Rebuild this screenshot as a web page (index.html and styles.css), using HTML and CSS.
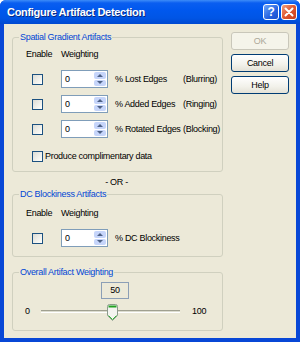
FILE: index.html
```html
<!DOCTYPE html>
<html lang="en">
<head>
  <meta charset="UTF-8">
  <title>Configure Artifact Detection</title>
  <link rel="stylesheet" href="styles.css">
</head>
<body>
<div class="window">
  <div class="titlebar">
    <span class="title">Configure Artifact Detection</span>
    <div class="caption-buttons">
      <span class="cap cap-help">?</span>
      <span class="cap cap-close">
        <svg width="10" height="10" viewBox="0 0 10 10"><path d="M1.5 1.5 L8.5 8.5 M8.5 1.5 L1.5 8.5" stroke="#fff" stroke-width="2" stroke-linecap="round"/></svg>
      </span>
    </div>
  </div>

  <div class="client">
    <div class="groups">

      <fieldset class="group group-spatial">
        <legend>Spatial Gradient Artifacts</legend>
        <div class="rows">
          <span class="head">Enable</span>
          <span class="head">Weighting</span>
          <span></span><span></span>

          <span class="check"></span>
          <div class="spin"><span class="spin-val">0</span><span class="spin-btns"><i class="up"></i><i class="down"></i></span></div>
          <span>% Lost Edges</span>
          <span>(Blurring)</span>

          <span class="check"></span>
          <div class="spin"><span class="spin-val">0</span><span class="spin-btns"><i class="up"></i><i class="down"></i></span></div>
          <span>% Added Edges</span>
          <span>(Ringing)</span>

          <span class="check"></span>
          <div class="spin"><span class="spin-val">0</span><span class="spin-btns"><i class="up"></i><i class="down"></i></span></div>
          <span>% Rotated Edges</span>
          <span>(Blocking)</span>
        </div>
        <label class="extra"><span class="check"></span>Produce complimentary data</label>
      </fieldset>

      <div class="or">- OR -</div>

      <fieldset class="group group-dc">
        <legend>DC Blockiness Artifacts</legend>
        <div class="rows">
          <span class="head">Enable</span>
          <span class="head">Weighting</span>
          <span></span><span></span>

          <span class="check"></span>
          <div class="spin"><span class="spin-val">0</span><span class="spin-btns"><i class="up"></i><i class="down"></i></span></div>
          <span>% DC Blockiness</span>
          <span></span>
        </div>
      </fieldset>

      <fieldset class="group group-overall">
        <legend>Overall Artifact Weighting</legend>
        <div class="value">50</div>
        <div class="slider">
          <span class="min">0</span>
          <div class="track">
            <svg class="thumb" width="11" height="17" viewBox="0 0 11 17">
              <path d="M0.5 2.5 Q0.5 0.5 2.5 0.5 L8.5 0.5 Q10.5 0.5 10.5 2.5 L10.5 11.5 L5.5 16.5 L0.5 11.5 Z" fill="#f4f4f0" stroke="#8c9b8c"/>
              <path d="M1.5 1.5 L9.5 1.5 L9.5 3.5 L1.5 3.5 Z" fill="#21a121"/>
              <path d="M1.5 11.5 L5.5 15.5 L9.5 11.5" fill="none" stroke="#3bb83b" stroke-width="1"/>
            </svg>
          </div>
          <span class="max">100</span>
        </div>
      </fieldset>

    </div>

    <div class="buttons">
      <button class="btn" disabled>OK</button>
      <button class="btn">Cancel</button>
      <button class="btn">Help</button>
    </div>
  </div>
</div>
</body>
</html>
```

FILE: styles.css
```css
* {
  margin: 0;
  padding: 0;
  box-sizing: border-box;
}
body {
  width: 300px;
  height: 342px;
  overflow: hidden;
  font-family: "Liberation Sans", Arial, sans-serif;
  font-size: 9px;
  letter-spacing: -0.3px;
  color: #000;
}

.window {
  width: 300px;
  height: 342px;
  display: flex;
  flex-direction: column;
  background: #0847d6;
  border-radius: 6px 6px 0 0;
}

/* title bar */
.titlebar {
  height: 24px;
  flex-shrink: 0;
  padding: 0 3px 0 7px;
  display: flex;
  align-items: center;
  justify-content: space-between;
  background: linear-gradient(#3d8cf8 0, #0a5ef0 3px, #0058ee 10px, #0055e5 18px, #0049d0 24px);
  border-radius: 6px 6px 0 0;
}
.title {
  color: #fff;
  font-weight: bold;
  font-size: 11px;
  letter-spacing: -0.3px;
  text-shadow: 1px 1px 0 #0a2a80;
}
.caption-buttons {
  display: flex;
  gap: 2px;
}
.cap {
  width: 16px;
  height: 16px;
  border: 1px solid #fff;
  border-radius: 3px;
  display: flex;
  align-items: center;
  justify-content: center;
  color: #fff;
  font-weight: bold;
  font-size: 12px;
}
.cap-help {
  background: linear-gradient(135deg, #6ea6fa, #2662e0 60%, #1c50cc);
}
.cap-close {
  background: linear-gradient(135deg, #f0a080, #e0562f 50%, #c8401e);
}

/* client area */
.client {
  flex: 1;
  margin: 0 4px 4px 4px;
  background: #ece9d8;
  display: flex;
  padding: 7px 0 0 8px;
}
.groups {
  width: 211px;
  display: flex;
  flex-direction: column;
}

.group {
  border: 1px solid #d0d0bf;
  border-radius: 3px;
  padding: 0 0 0 13px;
}
.group legend {
  color: #0046d5;
  margin-left: -7px;
  padding: 0 1px;
  line-height: 12px;
}

.rows {
  display: grid;
  grid-template-columns: 35px 54px 68px auto;
  row-gap: 7px;
  align-items: center;
  white-space: nowrap;
}
.head {
  line-height: 12px;
  margin-bottom: 3px;
}
.group-spatial .rows {
  margin-top: 5px;
}
.group-spatial {
  padding-bottom: 9px;
}
.group-dc .rows {
  margin-top: 7px;
}
.group-dc {
  padding-bottom: 9px;
}

.check {
  display: inline-block;
  width: 11px;
  height: 11px;
  margin-left: 6px;
  border: 1px solid #1c5180;
  background: linear-gradient(135deg, #dcdcd5, #f8f8f4 80%, #fff);
}

.spin {
  width: 47px;
  height: 18px;
  border: 1px solid #7f9db9;
  background: #fff;
  display: flex;
  justify-content: space-between;
}
.spin-val {
  padding-left: 3px;
  line-height: 16px;
}
.spin-btns {
  width: 14px;
  display: flex;
  flex-direction: column;
  gap: 1px;
  padding: 1px;
}
.spin-btns i {
  flex: 1;
  border-radius: 2px;
  background: #c6d5fa;
  position: relative;
}
.spin-btns i::after {
  content: "";
  position: absolute;
  left: 3px;
  top: 2px;
  border-left: 3px solid transparent;
  border-right: 3px solid transparent;
}
.spin-btns .up::after {
  border-bottom: 3px solid #4d6185;
}
.spin-btns .down::after {
  top: 1px;
  border-top: 3px solid #4d6185;
}

.extra {
  display: flex;
  align-items: center;
  gap: 2px;
  margin-top: 12px;
  line-height: 12px;
}

.or {
  text-align: center;
  line-height: 12px;
  padding: 4px 2px 0 0;
}

.group-overall {
  margin-top: 9px;
  padding-bottom: 11px;
}
.value {
  width: 28px;
  height: 17px;
  margin: 4px 0 0 75px;
  border: 1px solid #8c9fb6;
  text-align: center;
  line-height: 15px;
}
.slider {
  display: flex;
  align-items: center;
  height: 16px;
  margin-top: 4px;
  margin-left: -1px;
}
.min {
  width: 16px;
}
.track {
  width: 139px;
  height: 3px;
  border-top: 1px solid #a0a090;
  border-bottom: 1px solid #fff;
  background: #dcdccf;
  position: relative;
}
.thumb {
  position: absolute;
  left: 66px;
  top: -7px;
}
.max {
  margin-left: 12px;
}

/* buttons */
.buttons {
  display: flex;
  flex-direction: column;
  gap: 4px;
  margin: 1px 0 0 8px;
}
.btn {
  width: 58px;
  height: 18px;
  border: 1px solid #003c74;
  border-radius: 3px;
  background: linear-gradient(#ffffff, #f2f1ea 60%, #e4e1d6);
  font-family: inherit;
  font-size: 9px;
  letter-spacing: -0.3px;
  color: #000;
}
.btn:disabled {
  border-color: #c9c7ba;
  background: #f5f4ea;
  color: #aca899;
}
```
